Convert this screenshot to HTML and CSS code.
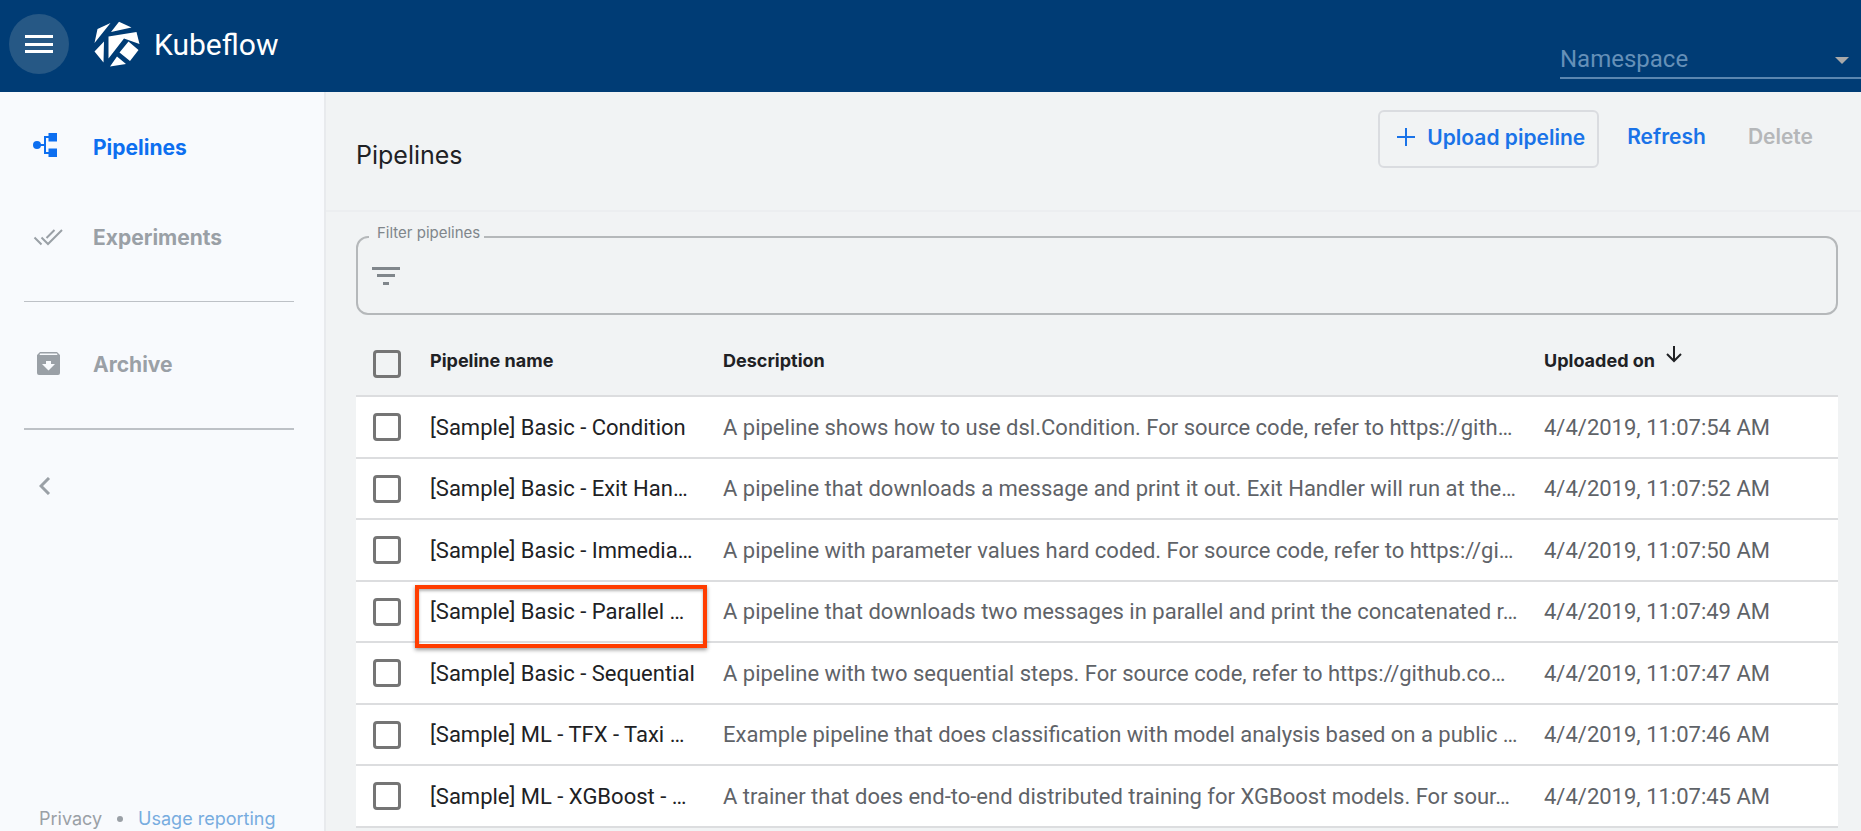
FILE: index.html
```html
<!DOCTYPE html>
<html lang="en">
<head>
<meta charset="utf-8">
<title>Kubeflow - Pipelines</title>
<link rel="stylesheet" href="styles.css">
</head>
<body>
<header class="topbar">
  <button class="menu-button" type="button" aria-label="Menu">
    <svg width="28" height="20" viewBox="0 0 28 20"><path fill="#fff" d="M0 1h28v3H0zM0 9h28v3H0zM0 16h28v3H0z"/></svg>
  </button>
  <a class="brand" href="#">
    <svg class="brand-logo" width="46" height="46" viewBox="0 0 46 46" fill="#fff"><path d="M16.500 2 3.500 8 .5 22zM25 .8 37.500 6.500 17 11zM42.500 11 14.500 15.500 14.500 37.500 30 17.500 45.500 23zM10 20.500.500 30.500 9.500 41.500zM34.500 20.500 44.500 29 36 40 25.500 31.500zM23 35.500 32 43 16 45.500z"/></svg>
    <span class="brand-name">Kubeflow</span>
  </a>
  <div class="namespace">
    <select class="namespace-select" aria-label="Namespace"><option>Namespace</option></select>
    <svg class="namespace-arrow" width="14" height="7" viewBox="0 0 14 7"><path fill="#a9a9a9" d="M0 0h14L7 7z"/></svg>
  </div>
</header>
<div class="layout">
  <nav class="sidebar">
    <a class="nav-item nav-active" href="#">
      <svg class="nav-icon" width="30" height="30" viewBox="0 0 30 30"><circle cx="4" cy="13" r="4" fill="#0d6ff0"/><path d="M4 13h8M18 5h-6v16h6" fill="none" stroke="#0d6ff0" stroke-width="2"/><path fill="#0d6ff0" d="M15.500 1H24v8.500h-8.500zM15.500 16.500H24V25h-8.500z"/></svg>
      <span>Pipelines</span>
    </a>
    <a class="nav-item" href="#">
      <svg class="nav-icon" width="30" height="30" viewBox="0 0 30 30" fill="none" stroke="#9aa0a6" stroke-width="2"><path d="M1.500 15.500l7 7M8.500 15.500l6.500 6.500L29 8M13.500 16l8-8"/></svg>
      <span>Experiments</span>
    </a>
    <hr class="rule">
    <a class="nav-item" href="#">
      <svg class="nav-icon" width="30" height="30" viewBox="0 0 30 30"><path fill="#9aa0a6" fill-rule="evenodd" d="M7 3h17l3 3v18q0 2-2 2H6q-2 0-2-2V6zM7 4.500L6.500 6h18L24 4.500zM13 12v3H9l6.500 6.500L22 15h-4v-3z"/></svg>
      <span>Archive</span>
    </a>
    <hr class="rule rule-strong">
    <button class="collapse" type="button" aria-label="Collapse">
      <svg width="12" height="18" viewBox="0 0 12 18"><path d="M10 1L2 9l8 8" fill="none" stroke="#9aa0a6" stroke-width="3"/></svg>
    </button>
    <footer class="side-footer"><a class="privacy" href="#">Privacy</a><span class="dot"></span><a class="usage" href="#">Usage reporting</a></footer>
  </nav>
  <main class="content">
    <div class="toolbar">
      <h1 class="title">Pipelines</h1>
      <div class="actions">
        <button class="button button-outlined" type="button"><svg width="18" height="18" viewBox="0 0 18 18"><path d="M9 0v18M0 9h18" stroke="#1a73e8" stroke-width="2"/></svg>Upload pipeline</button>
        <button class="button" type="button">Refresh</button>
        <button class="button" type="button" disabled>Delete</button>
      </div>
    </div>
    <div class="list">
      <fieldset class="filter">
        <legend class="filter-legend"><label for="filter">Filter pipelines</label></legend>
        <svg width="28" height="18" viewBox="0 0 28 18"><path fill="#80868b" d="M0 0h28v3H0zM5 7h18v3H5zM11 15h6v3h-6z"/></svg>
        <input class="filter-input" id="filter" type="text">
      </fieldset>
      <table class="table">
        <colgroup><col class="col-check"><col class="col-name"><col><col class="col-date"></colgroup>
        <thead>
          <tr>
            <th class="head-check"><input class="check" type="checkbox" aria-label="Select all"></th>
            <th>Pipeline name</th>
            <th>Description</th>
            <th><span class="sorted">Uploaded on<svg width="16" height="17" viewBox="0 0 16 17"><path d="M8 0v15M1 8l7 7 7-7" fill="none" stroke="#202124" stroke-width="2"/></svg></span></th>
          </tr>
        </thead>
        <tbody>
          <tr><td><input class="check" type="checkbox" aria-label="Select Condition"></td><td class="name">[Sample] Basic - Condition</td><td>A pipeline shows how to use dsl.Condition. For source code, refer to https://gith…</td><td>4/4/2019, 11:07:54 AM</td></tr>
          <tr><td><input class="check" type="checkbox" aria-label="Select Exit Handler"></td><td class="name">[Sample] Basic - Exit Han…</td><td>A pipeline that downloads a message and print it out. Exit Handler will run at the…</td><td>4/4/2019, 11:07:52 AM</td></tr>
          <tr><td><input class="check" type="checkbox" aria-label="Select Immediate Value"></td><td class="name">[Sample] Basic - Immedia…</td><td>A pipeline with parameter values hard coded. For source code, refer to https://gi…</td><td>4/4/2019, 11:07:50 AM</td></tr>
          <tr><td><input class="check" type="checkbox" aria-label="Select Parallel"></td><td class="name highlighted">[Sample] Basic - Parallel …</td><td>A pipeline that downloads two messages in parallel and print the concatenated r…</td><td>4/4/2019, 11:07:49 AM</td></tr>
          <tr><td><input class="check" type="checkbox" aria-label="Select Sequential"></td><td class="name">[Sample] Basic - Sequential</td><td>A pipeline with two sequential steps. For source code, refer to https://github.co…</td><td>4/4/2019, 11:07:47 AM</td></tr>
          <tr><td><input class="check" type="checkbox" aria-label="Select TFX Taxi"></td><td class="name">[Sample] ML - TFX - Taxi …</td><td>Example pipeline that does classification with model analysis based on a public …</td><td>4/4/2019, 11:07:46 AM</td></tr>
          <tr><td><input class="check" type="checkbox" aria-label="Select XGBoost"></td><td class="name">[Sample] ML - XGBoost - …</td><td>A trainer that does end-to-end distributed training for XGBoost models. For sour…</td><td>4/4/2019, 11:07:45 AM</td></tr>
        </tbody>
      </table>
    </div>
  </main>
</div>
</body>
</html>
```
FILE: styles.css
```css
* { box-sizing: border-box; }

body {
  margin: 0;
  height: 100vh;
  overflow: hidden;
  display: flex;
  flex-direction: column;
  font-family: Roboto, "Noto Sans", sans-serif;
  font-size: 22px;
  color: #5f6368;
  background: #f1f3f4;
}

a { color: inherit; text-decoration: none; }
button { border: 0; padding: 0; background: none; font: inherit; color: inherit; }
svg { display: block; flex: none; }

.topbar {
  flex: none;
  display: flex;
  align-items: flex-start;
  height: 92px;
  padding-left: 9px;
  background: #003c75;
}
.menu-button {
  display: grid;
  place-items: center;
  width: 60px;
  height: 60px;
  margin-top: 14px;
  border-radius: 50%;
  background: #265885;
}
.brand {
  display: flex;
  align-items: center;
  gap: 14px;
  height: 60px;
  margin: 14px 0 0 25px;
  color: #fff;
}
.brand-name { font-size: 30px; }
.namespace {
  position: relative;
  width: 301px;
  margin: 40px 0 0 auto;
}
.namespace-select {
  display: block;
  appearance: none;
  width: 100%;
  height: 39px;
  padding: 0;
  border: 0;
  border-bottom: 2px solid #5a86b0;
  border-radius: 0;
  background: none;
  font: 24px Roboto, "Noto Sans", sans-serif;
  color: #6590b8;
}
.namespace-arrow { position: absolute; right: 12px; top: 17px; }

.layout { flex: 1; min-height: 0; display: flex; }

.sidebar {
  flex: none;
  display: flex;
  flex-direction: column;
  width: 326px;
  padding: 10px 30px 0 24px;
  border-right: 2px solid #e8eaed;
  background: #f8fafd;
  font-family: Inter, "Open Sans", sans-serif;
}
.nav-item {
  display: flex;
  align-items: center;
  gap: 30px;
  height: 90px;
  padding-left: 9px;
  font-weight: 700;
  font-size: 21px;
  color: #9aa0a6;
}
.nav-active { color: #0d6ff0; }
.rule {
  width: 100%;
  height: 1px;
  margin: 19px 0 17px;
  border: 0;
  background: #bdc1c6;
}
.rule-strong { height: 2px; }
.collapse { align-self: flex-start; margin: 30px 0 0 15px; }
.side-footer {
  display: flex;
  align-items: center;
  gap: 15px;
  margin: auto 0 0 15px;
  font-size: 18px;
  line-height: 24px;
  white-space: nowrap;
}
.privacy { color: #9aa0a6; }
.dot { width: 6px; height: 6px; border-radius: 50%; background: #9aa0a6; }
.usage { color: #77acdf; }

.content { flex: 1; min-width: 0; }
.toolbar {
  display: flex;
  justify-content: space-between;
  height: 120px;
  padding: 18px 27px 0 30px;
  border-bottom: 2px solid #eceef0;
  font-family: Inter, "Open Sans", sans-serif;
}
.title {
  margin: 29px 0 0;
  font-size: 25px;
  line-height: 32px;
  font-weight: 400;
  color: #202124;
}
.actions { display: flex; align-items: flex-start; }
.button {
  display: flex;
  align-items: center;
  gap: 12px;
  height: 52px;
  padding: 0 21px;
  font-size: 21px;
  font-weight: 600;
  color: #1a73e8;
}
.button:disabled { color: #b5b7b9; }
.button-outlined {
  height: 58px;
  margin-right: 7px;
  padding: 0 12px 4px 17px;
  border: 2px solid #dadce0;
  border-radius: 6px;
}

.list { padding: 12px 23px 0 30px; }
.filter {
  display: flex;
  align-items: center;
  height: 91px;
  margin: 0;
  padding: 0 0 12px 14px;
  border: 2px solid #b5b8ba;
  border-radius: 12px;
}
.filter-legend {
  margin-left: -3px;
  padding: 0 4px 8px 8px;
  font: 15px/18px Inter, "Open Sans", sans-serif;
  color: #80868b;
}
.filter-input {
  flex: 1;
  border: 0;
  outline: 0;
  background: none;
  font: inherit;
}

.table {
  width: 100%;
  border-collapse: separate;
  border-spacing: 0;
  table-layout: fixed;
}
.col-check { width: 74px; }
.col-name { width: 293px; }
.col-date { width: 294px; }
.table th, .table td {
  height: 62px;
  padding: 0;
  border-bottom: 2px solid #dcdddf;
  text-align: left;
  vertical-align: middle;
  white-space: nowrap;
}
.table tr:nth-child(even) td { height: 61px; }
.table th {
  height: 82px;
  padding-top: 11px;
  font: 700 18px Inter, "Open Sans", sans-serif;
  color: #202124;
}
.table .head-check { padding-top: 17px; }
.table td { background: #fff; }
.table .name { color: #202124; }
.table .highlighted { position: relative; }
.highlighted::after {
  content: "";
  position: absolute;
  inset: 3px 16px -7px -15px;
  border: 4px solid #ff3d00;
  box-shadow: 0 2px 4px rgba(0, 0, 0, .4), inset 0 2px 3px rgba(0, 0, 0, .3);
}
.check {
  display: block;
  appearance: none;
  width: 28px;
  height: 28px;
  margin: 0 0 0 17px;
  border: 3px solid #757575;
  border-radius: 4px;
}
.sorted { display: flex; gap: 11px; }
.sorted svg { margin-top: -4px; }
```
